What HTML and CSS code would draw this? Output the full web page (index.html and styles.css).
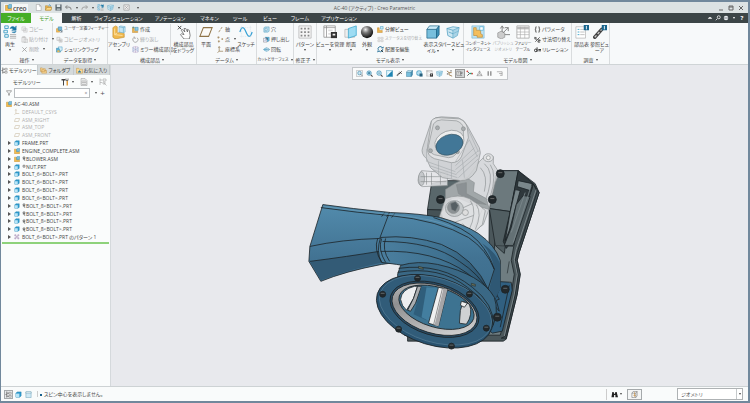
FILE: index.html
```html
<!DOCTYPE html>
<html lang="ja">
<head>
<meta charset="utf-8">
<title>AC-40 (アクティブ) - Creo Parametric</title>
<link rel="stylesheet" href="styles.css">
</head>
<body>
<svg class="defs" aria-hidden="true">
  <defs>
    <linearGradient id="gDuct" x1="0" y1="0" x2="0" y2="1"><stop offset="0" stop-color="#528bac"/><stop offset=".5" stop-color="#427393"/><stop offset="1" stop-color="#3b6a89"/></linearGradient>
    <linearGradient id="gBand" x1="0" y1="0" x2="1" y2="0"><stop offset="0" stop-color="#4b7f9f"/><stop offset=".6" stop-color="#3f7190"/><stop offset="1" stop-color="#2b516b"/></linearGradient>
    <linearGradient id="gRing" x1="0" y1="0" x2="1" y2="1"><stop offset="0" stop-color="#c9c9c9"/><stop offset=".35" stop-color="#8f8f90"/><stop offset=".7" stop-color="#b9b9ba"/><stop offset="1" stop-color="#e6e6e6"/></linearGradient>
    <radialGradient id="gBall" cx=".38" cy=".3" r=".7"><stop offset="0" stop-color="#eee"/><stop offset=".4" stop-color="#777"/><stop offset="1" stop-color="#111"/></radialGradient>
  </defs>
  <symbol id="doc" viewBox="0 0 16 16"><path d="M3 1h7l4 4v10H3z" fill="#fff" stroke="#888"/><path d="M10 1v4h4" fill="none" stroke="#888"/></symbol>
  <symbol id="screen" viewBox="0 0 16 16"><path d="M2 2h12v13H2z" fill="#cfe9f5" stroke="#5b93ae"/><path d="M2 2h12v3H2z" fill="#fff" stroke="#5b93ae"/></symbol>
  <symbol id="folder" viewBox="0 0 16 16"><path d="M1 14V4h5l2 2h6v8z" fill="#e9b650" stroke="#a87a24"/><path d="M1 14l3-6h12l-3 6z" fill="#fbd987" stroke="#a87a24"/><path d="M8 4q3-4 5 0" fill="none" stroke="#287fae" stroke-width="2"/></symbol>
  <symbol id="save" viewBox="0 0 16 16"><path d="M1 1h14v14H1z" fill="#59656b"/><path d="M4 1h8v6H4z" fill="#dfe7ea"/><path d="M4 10h8v5H4z" fill="#aeb8bc"/></symbol>
  <symbol id="undo" viewBox="0 0 16 16"><path d="M5 3L1 7l4 4M2 7h7q5 0 5 6" fill="none" stroke="#777" stroke-width="2"/></symbol>
  <symbol id="redo" viewBox="0 0 16 16"><path d="M11 3l4 4-4 4M14 7H7q-5 0-5 6" fill="none" stroke="#999" stroke-width="2"/></symbol>
  <symbol id="closewin" viewBox="0 0 16 16"><path d="M2 2h12v12H2z" fill="#eee" stroke="#999" stroke-width="1.5"/><path d="M5 5l6 6M11 5l-6 6" stroke="#999" stroke-width="1.5"/></symbol>
  <symbol id="regen" viewBox="0 0 16 16"><path d="M2 1h4v3H2zM1 6h4v3H1zM2 11h4v3H2z" fill="#eaf5fa" stroke="#3e9dc5"/><path d="M8 11h7M8 13h7M8 15h7" stroke="#aaa"/><path d="M8 4q2-4 6-1l1-2v5h-5l2-1q-2-2-4-1zM15 7q-1 3-5 1" fill="#1876a6" stroke="#1876a6" stroke-width=".6"/></symbol>
  <symbol id="copy" viewBox="0 0 16 16"><path d="M2 2h8v8H2zM6 6h8v8H6z" fill="#f3f3f3" stroke="#b5b5b5"/><path d="M8 9h4M8 11h4" stroke="#bbb"/></symbol>
  <symbol id="paste" viewBox="0 0 16 16"><path d="M2 3h9v11H2zM4 1h5v3H4zM7 7h8v8H7z" fill="#eee" stroke="#b0b0b0"/></symbol>
  <symbol id="cross" viewBox="0 0 16 16"><path d="M3 3l10 10M13 3L3 13" stroke="#999" stroke-width="1.8"/></symbol>
  <symbol id="udf" viewBox="0 0 16 16"><path d="M1 6h7v8H1z" fill="#f5bf55" stroke="#c38424"/><path d="M5 2h8v8H5z" fill="#78b9d9" stroke="#26789f"/><path d="M9 9l5 5M14 9v5H9" stroke="#345" fill="none"/></symbol>
  <symbol id="copygeo" viewBox="0 0 16 16"><path d="M2 3h7v7H2zM7 7h7v7H7z" fill="#eee" stroke="#aaa"/><circle cx="11" cy="11" r="2" fill="#bbb"/></symbol>
  <symbol id="shrink" viewBox="0 0 16 16"><path d="M1 5h9v9H1z" fill="#5db2d8" stroke="#25799f"/><path d="M5 2h9v8l-4 2z" fill="#d6eef8" stroke="#3390b8"/><path d="M3 10h5v4H3z" fill="#f2b94d"/></symbol>
  <symbol id="assemble" viewBox="0 0 16 16"><path d="M1 3l3-2 2 1v7l6-1 2 2v4L4 16l-3-2z" fill="#efb84e" stroke="#b98325" stroke-width=".6"/><path d="M3 4v7l9 1M6 9l-3 2" fill="none" stroke="#ffe1a0"/><path d="M8 2l2-1 5 1v6l-2 1-5-1z" fill="#c5e5f4" stroke="#65abc9" stroke-width=".6"/><path d="M8 2l5 1v6M13 3l2-1" stroke="#509cbd" fill="none" stroke-width=".6"/></symbol>
  <symbol id="create" viewBox="0 0 16 16"><path d="M1 3h4v9h8v3H1z" fill="#efba51" stroke="#b17d26"/><path d="M7 3h7v7H7z" fill="#8bcbe8" stroke="#27789e"/><path d="M3 1v5M1 3h5" stroke="#1689b5"/></symbol>
  <symbol id="repeat" viewBox="0 0 16 16"><path d="M12 4a6 6 0 1 1-7-1M5 1v4h4" fill="none" stroke="#999" stroke-width="1.7"/></symbol>
  <symbol id="mirror" viewBox="0 0 16 16"><path d="M2 3l5 5-5 5zM14 3L9 8l5 5z" fill="#dce6f5" stroke="#7986b8"/><path d="M8 1v14M2 2h12M2 14h12" stroke="#a388ba"/></symbol>
  <symbol id="drag" viewBox="0 0 16 16"><path d="M8 16L4 11l1-1 3 1-3-5 1-1 3 3-1-4 2 0 2 4 0-3 2 1 1 6-1 4z" fill="#fff" stroke="#555" stroke-width=".8"/><path d="M1 1l4 4M5 1L1 5" stroke="#333"/></symbol>
  <symbol id="plane" viewBox="0 0 16 16"><path d="M5 3h10l-4 10H1z" fill="#fcfbf7" stroke="#8f7448" stroke-width="1.2"/></symbol>
  <symbol id="axis" viewBox="0 0 16 16"><path d="M4 14l8-12" stroke="#8f7448" stroke-width="1.6" stroke-dasharray="6 2"/></symbol>
  <symbol id="point" viewBox="0 0 16 16"><path d="M3 1v5M1 3h5M12 5v4M10 7h4M4 10v5M2 12h5" stroke="#977746" stroke-width="1.5"/></symbol>
  <symbol id="csys" viewBox="0 0 16 16"><path d="M5 2v10h9M5 12l-4 3M3 4l2-3 2 3" fill="none" stroke="#8f7448" stroke-width="1.5"/></symbol>
  <symbol id="sketch" viewBox="0 0 16 16"><path d="M1 8q3-10 7 0t7 0" fill="none" stroke="#36a1d5" stroke-width="1.4"/><path d="M1 3h14M1 13h14M3 1v14M13 1v14" stroke="#c9d9e2" stroke-dasharray="1 1" stroke-width=".6"/></symbol>
  <symbol id="hole" viewBox="0 0 16 16"><path d="M2 4l3-2h9v10l-3 2H2z" fill="#b9dfef" stroke="#3f91b5"/><ellipse cx="7" cy="8" rx="2" ry="4" fill="#fff" stroke="#287da6"/></symbol>
  <symbol id="extrude" viewBox="0 0 16 16"><path d="M1 5h8v9H1z" fill="#eef" stroke="#777"/><path d="M5 3h9v8l-4 2V5z" fill="#6cbde0" stroke="#247da7"/><path d="M4 11l5-5M6 5h4v4" stroke="#173f55" fill="none"/></symbol>
  <symbol id="revolve" viewBox="0 0 16 16"><path d="M1 8q3-3 7-4v8q-5-1-7-4z" fill="#a9d8eb" stroke="#2d8ab3"/><path d="M8 4q6 1 7 4-1 3-7 4M2 8h13" fill="#d5ecf5" stroke="#2b7fa6"/></symbol>
  <symbol id="pattern" viewBox="0 0 16 16"><path d="M1 1h14v14H1z" fill="#f4f4f4" stroke="#999" stroke-width=".6"/><path d="M3 3h2v2H3zM7 3h2v2H7zM11 3h2v2h-2zM3 7h2v2H3zM7 7h2v2H7zM11 7h2v2h-2zM3 11h2v2H3zM7 11h2v2H7zM11 11h2v2h-2z" fill="#888"/></symbol>
  <symbol id="viewmgr" viewBox="0 0 16 16"><path d="M1 1h13v13H1z" fill="#fff" stroke="#888" stroke-width=".8"/><path d="M1 3h13M4 1v13" stroke="#888" stroke-width=".8"/><path d="M6 5h5v2H6zM6 9h3v2H6z" fill="#ddd"/><path d="M9 8h7v7H9z" fill="#333"/><path d="M11 10h3v2h-3z" fill="#eee"/></symbol>
  <symbol id="section" viewBox="0 0 16 16"><path d="M1 5h8l3 1v8H1z" fill="#eee" stroke="#aaa" stroke-width=".7"/><path d="M5 4l9-3v11l-9 3z" fill="#9ddcf3" stroke="#2ca0ca" stroke-width=".8"/></symbol>
  <symbol id="ball" viewBox="0 0 16 16"><circle cx="8" cy="8" r="7" fill="url(#gBall)"/></symbol>
  <symbol id="explode" viewBox="0 0 16 16"><path d="M1 4h4v6h7v5H1z" fill="#edb54c" stroke="#b98124"/><path d="M8 1h6v6H8z" fill="#c7e9f6" stroke="#2f91b9"/></symbol>
  <symbol id="status" viewBox="0 0 16 16"><path d="M2 3h5v4H2zM9 3h5v4H9zM2 9h5v4H2zM9 9h5v4H9z" fill="#eee" stroke="#bbb"/></symbol>
  <symbol id="editpos" viewBox="0 0 16 16"><path d="M3 9a5 5 0 0 1 9-5M13 7a5 5 0 0 1-8 5" fill="none" stroke="#1e6c94" stroke-width="2"/><path d="M9 5h6V1zM7 11l-6 4v-5z" fill="#1e6c94"/><path d="M9 9l5 5" stroke="#222" stroke-width="2"/></symbol>
  <symbol id="cube" viewBox="0 0 16 16"><path d="M1 5h11v10H1z" fill="#78bfdd" stroke="#1b6386" stroke-width=".8"/><path d="M1 5l3-4h11l-3 4z" fill="#c9eaf7" stroke="#1b6386" stroke-width=".8"/><path d="M12 5l3-4v10l-3 4z" fill="#3c8eb4" stroke="#1b6386" stroke-width=".8"/></symbol>
  <symbol id="selbox" viewBox="0 0 16 16"><path d="M2 5h9v10H2zM2 5l3-4h9l-3 4M14 1v10l-3 4" fill="#f5f7f7" stroke="#555"/><path d="M8 3v9M6 9l2 3 3-2" fill="none" stroke="#c58b3b" stroke-width="1.5"/></symbol>
  <symbol id="persp" viewBox="0 0 16 16"><path d="M1 4l7-2 7 1-2 9-5 3-6-3z" fill="#cce7f2" stroke="#4a9bbd" stroke-width=".8"/><path d="M1 4l7 2 7-3M8 6v9M3 8l5 2 6-3" fill="none" stroke="#4a9bbd" stroke-width=".8"/><path d="M8 6l7-3-2 9-5 3z" fill="#91c6dd" opacity=".6"/></symbol>
  <symbol id="iface" viewBox="0 0 16 16"><path d="M1 1h14v14H1z" fill="#bee3f2" stroke="#73b4d1" stroke-width=".7"/><path d="M3 10V3h3v3h5v4l2 1v3H7v-2H3z" fill="#f3be5d" stroke="#bb862f" stroke-width=".7"/><path d="M10 2h4v4h-4z" fill="#fff" stroke="#2b9bcb" stroke-width=".6"/></symbol>
  <symbol id="publish" viewBox="0 0 16 16"><path d="M2 9l4-2 4 2v5l-4 2-4-2z" fill="#ccc" stroke="#888" stroke-width=".7"/><path d="M7 8V2M5 4l2-3 2 3M8 9l6-6M10 3h4v4M10 11h6" fill="none" stroke="#777"/></symbol>
  <symbol id="table" viewBox="0 0 16 16"><path d="M1 1h14v14H1z" fill="#fff" stroke="#999" stroke-width=".8"/><path d="M1 2h14v3H1z" fill="#bbb"/><path d="M1 8h14M1 11h14M5 2v13M10 2v13" stroke="#aaa" stroke-width=".7"/></symbol>
  <symbol id="param" viewBox="0 0 16 16"><path d="M6 2H4v5L2 8l2 1v5h2M10 2h2v5l2 1-2 1v5h-2" fill="none" stroke="#222" stroke-width="1.5"/></symbol>
  <symbol id="dims" viewBox="0 0 16 16"><path d="M2 2v5h5M2 4h4M3 13L13 3M9 9h5v2H9v3h5" fill="none" stroke="#222" stroke-width="1.6"/></symbol>
  <symbol id="rel" viewBox="0 0 16 16"><circle cx="4" cy="10" r="3" fill="none" stroke="#222" stroke-width="2"/><path d="M7 3v10M10 8h6M10 11h6" stroke="#222" stroke-width="2"/></symbol>
  <symbol id="bom" viewBox="0 0 16 16"><path d="M1 2h11v13H1z" fill="#fff" stroke="#aaa" stroke-width=".7"/><path d="M3 5h2M3 8h2M3 11h2" stroke="#35a0c9"/><path d="M6 5h4M6 8h5M6 11h5" stroke="#bbb"/><path d="M10 0h6v6h-6z" fill="#17648d"/><path d="M13 1v4" stroke="#fff"/></symbol>
  <symbol id="chain" viewBox="0 0 16 16"><path d="M2 14l8-9" stroke="#444" stroke-width="4" stroke-linecap="round"/><path d="M2 14l8-9" stroke="#ccc" stroke-width="1.4" stroke-dasharray="3 2"/><path d="M10 0h6v6h-6z" fill="#17648d"/><path d="M13 1v4" stroke="#fff"/></symbol>
  <symbol id="asm" viewBox="0 0 16 16"><path d="M1 3h6v6h8v6H1z" fill="#f4bc4f" stroke="#b98325"/><path d="M7 3l2-2h6v7l-2 2H7z" fill="#78bddd" stroke="#24799f"/></symbol>
  <symbol id="part" viewBox="0 0 16 16"><path d="M2 5l3-3h9v9l-3 3H2z" fill="#2f9bce" stroke="#1b7daa"/><path d="M2 6h8v8H2z" fill="#b8e5f7"/></symbol>
  <symbol id="tplane" viewBox="0 0 16 16"><path d="M4 4h11l-3 8H1z" fill="none" stroke="#c8baa0" stroke-width="1.5"/></symbol>
  <symbol id="tcsys" viewBox="0 0 16 16"><path d="M5 2v10h9M5 12l-4 3M3 4l2-3 2 3" fill="none" stroke="#c8baa0" stroke-width="1.5"/></symbol>
  <symbol id="tpattern" viewBox="0 0 16 16"><path d="M2 2h3v3H2zM10 2h3v3h-3zM2 10h3v3H2zM10 10h3v3h-3zM6 6h3v3H6z" fill="#fff" stroke="#75508f"/></symbol>
  <symbol id="flex" viewBox="0 0 12 16"><path d="M3 3h6v4H3zM2 9h8M6 7v6l4 1" fill="none" stroke="#333" stroke-width="1.6"/></symbol>
  <symbol id="fixed" viewBox="0 0 12 16"><path d="M3 4h6v6H3z" fill="none" stroke="#444" stroke-width="1.8"/></symbol>
  <symbol id="mag" viewBox="0 0 16 16"><circle cx="7" cy="7" r="5" fill="#d4edf7" stroke="#2f88b1" stroke-width="1.6"/><path d="M11 11l4 4" stroke="#444" stroke-width="2.4"/><path d="M5 7h4" stroke="#17688f" stroke-width="1.5"/></symbol>
  <symbol id="magplus" viewBox="0 0 16 16"><circle cx="7" cy="7" r="5" fill="#d4edf7" stroke="#2f88b1" stroke-width="1.6"/><path d="M11 11l4 4" stroke="#444" stroke-width="2.4"/><path d="M4 7h6M7 4v6" stroke="#17688f" stroke-width="2"/></symbol>
  <symbol id="refit" viewBox="0 0 16 16"><path d="M1 1h14v14H1z" fill="#edf5f8" stroke="#999"/><circle cx="8" cy="7" r="4" fill="#cde7f2" stroke="#4990b0" stroke-width="1.5"/><path d="M11 10l3 3" stroke="#555" stroke-width="2"/></symbol>
  <symbol id="repaint" viewBox="0 0 16 16"><path d="M1 1h14v14H1z" fill="#d8f1fa" stroke="#368baf"/><path d="M1 15L15 1v14z" fill="#1f84b2"/><path d="M4 10l5-6" stroke="#fff" stroke-width="2"/></symbol>
  <symbol id="render" viewBox="0 0 16 16"><path d="M2 13l6-6" fill="none" stroke="#777" stroke-width="3"/><path d="M7 9l6-6M8 4l5 5" stroke="#333" fill="none" stroke-width="2"/></symbol>
  <symbol id="orient" viewBox="0 0 16 16"><circle cx="7" cy="7" r="6" fill="#8bcbe5" stroke="#2581ac"/><path d="M7 1v12M1 7h12" stroke="#fff"/><path d="M8 8h7v7H8z" fill="#275f7b"/></symbol>
  <symbol id="csysdot" viewBox="0 0 16 16"><path d="M2 2l5 4v5M7 6h6M7 11l7 3" fill="none" stroke="#99784b" stroke-width="2"/><path d="M2 9h3M10 2h3" stroke="#333" stroke-width="2"/></symbol>
  <symbol id="annot" viewBox="0 0 16 16"><path d="M2 3h8v9H2z" fill="#fff" stroke="#444"/><path d="M4 6h4M4 9h4M10 5h4v3h-4M10 12h4" stroke="#333" fill="none"/></symbol>
  <symbol id="spin" viewBox="0 0 16 16"><path d="M3 3l5 5-5 5" fill="none" stroke="#555" stroke-width="2"/><path d="M8 8h6" stroke="#25a178" stroke-width="3"/><circle cx="3" cy="3" r="2" fill="#d54c48"/><circle cx="14" cy="8" r="2" fill="#d54c48"/></symbol>
  <symbol id="tri" viewBox="0 0 16 16"><path d="M8 2l6 11H2zM8 2v7l6 4M8 9l-6 4" fill="none" stroke="#888" stroke-width="1.2"/></symbol>
  <symbol id="pause" viewBox="0 0 16 16"><path d="M5 3v10M11 3v10" stroke="#888" stroke-width="3"/></symbol>
  <symbol id="play" viewBox="0 0 16 16"><path d="M2 4h12M7 8h7M9 12h5M14 4v9" stroke="#999" stroke-width="1.6"/></symbol>
  <symbol id="treeicon" viewBox="0 0 16 16"><path d="M4 1v14M4 5h5M4 12h5M1 8h3" stroke="#555" stroke-width="1.5"/><path d="M9 3h5v4H9zM9 10h5v4H9z" fill="#fff" stroke="#555"/></symbol>
  <symbol id="folders" viewBox="0 0 16 16"><path d="M1 10V2h4l2 2h5v6zM4 14V6h4l2 2h5v6z" fill="#f5d391" stroke="#bd8838"/></symbol>
  <symbol id="star" viewBox="0 0 16 16"><path d="M1 14V3h5l2 2h7v9z" fill="#f8d994" stroke="#bd8838"/><path d="M8 6l1 3h3l-2 2 1 3-3-2-3 2 1-3-2-2h3z" fill="#287aac"/></symbol>
  <symbol id="hammer" viewBox="0 0 16 16"><path d="M1 2h8v3H1zM4 5h2v10H4z" fill="#444"/><path d="M11 5h3v10h-3z" fill="#df9b3c"/><path d="M10 1v4h4V1" fill="none" stroke="#555" stroke-width="1.5"/></symbol>
  <symbol id="sheet" viewBox="0 0 16 16"><path d="M2 1h8l4 4v10H2z" fill="#e9eaea" stroke="#999"/><path d="M4 6h8v7H4zM4 9h8M8 6v7" fill="#fff" stroke="#999"/></symbol>
  <symbol id="cols" viewBox="0 0 16 16"><path d="M2 1v13M2 4h4M2 9h4M8 2h6v4H8zM8 8h4v4H8zM10 10l5 5" fill="none" stroke="#aaa" stroke-width="1.3"/></symbol>
  <symbol id="funnel" viewBox="0 0 16 16"><path d="M1 2h14L9 9v5H7V9z" fill="none" stroke="#555" stroke-width="1.3"/></symbol>
  <symbol id="bino" viewBox="0 0 16 16"><path d="M3 2h3l1 4h2l1-4h3l3 12h-6V9H7v5H1z" fill="#222"/></symbol>
</svg>

<div class="window">
  <header class="titlebar">
    <div class="quick">
      <span class="brand"><svg class="ic"><use href="#asm"/></svg><b>creo</b></span>
      <button aria-label="新規"><svg class="ic"><use href="#doc"/></svg></button>
      <button aria-label="開く"><svg class="ic"><use href="#folder"/></svg></button>
      <button aria-label="保存"><svg class="ic"><use href="#save"/></svg></button>
      <button class="drop" aria-label="元に戻す"><svg class="ic sm"><use href="#undo"/></svg></button>
      <button class="drop" aria-label="やり直し"><svg class="ic sm"><use href="#redo"/></svg></button>
      <button aria-label="再生"><svg class="ic sm"><use href="#regen"/></svg></button>
      <button class="drop" aria-label="ウィンドウ"><svg class="ic sm"><use href="#persp"/></svg></button>
      <button aria-label="閉じる"><svg class="ic sm"><use href="#closewin"/></svg></button>
      <button class="drop" aria-label="カスタマイズ"></button>
    </div>
    <h1>AC-40 (アクティブ) - Creo Parametric</h1>
    <div class="wincontrols">
      <button aria-label="最小化"><svg viewBox="0 0 6 6"><path d="M1 5h4"/></svg></button>
      <button aria-label="最大化"><svg viewBox="0 0 6 6"><path d="M1 1h4v4H1zM1 2h4"/></svg></button>
      <button aria-label="終了"><svg viewBox="0 0 6 6"><path d="M1 1l4 4M5 1L1 5"/></svg></button>
    </div>
  </header>

  <nav class="tabs">
    <button class="file">ファイル</button>
    <button class="on">モデル</button>
    <button class="t3">解析</button>
    <button class="t4">ライブシミュレーション</button>
    <button class="t5">アノテーション</button>
    <button class="t6">マネキン</button>
    <button class="t7">ツール</button>
    <button class="t7">ビュー</button>
    <button class="t7">フレーム</button>
    <button class="t5">アプリケーション</button>
    <div class="help">
      <button aria-label="リボンを最小化"><svg viewBox="0 0 8 8"><path d="M1 5q3-5 6 0z" fill="#fff"/></svg></button>
      <button aria-label="検索"><svg viewBox="0 0 8 8"><circle cx="5" cy="3" r="2" fill="none" stroke="#fff"/><path d="M3 5L1 7" stroke="#fff"/></svg></button>
      <button aria-label="学習"><svg viewBox="0 0 8 8"><circle cx="4" cy="4" r="3" fill="#e9eeee"/><path d="M1 4h6" stroke="#667"/></svg></button>
      <button class="drop" aria-label="その他"></button>
      <button>?</button>
    </div>
  </nav>

  <div class="ribbon">
    <section class="group g1"><div class="tools">
      <button class="big w18 drop"><svg><use href="#regen"/></svg><span>再生</span></button>
      <div class="list">
        <button class="off"><svg><use href="#copy"/></svg>コピー</button>
        <button class="off drop"><svg><use href="#paste"/></svg>貼り付け</button>
        <button class="off drop"><svg><use href="#cross"/></svg>削除</button>
      </div></div><h2>操作</h2></section>
    <section class="group g2"><div class="tools">
      <div class="list pad">
        <button class="tight"><svg><use href="#udf"/></svg>ユーザー定義フィーチャー</button>
        <button class="off"><svg><use href="#copygeo"/></svg>コピージオメトリ</button>
        <button><svg><use href="#shrink"/></svg>シュリンクラップ</button>
      </div></div><h2>データを取得</h2></section>
    <section class="group g3"><div class="tools">
      <button class="big w22 drop"><svg><use href="#assemble"/></svg><span>アセンブリ</span></button>
      <div class="list">
        <button><svg><use href="#create"/></svg>作成</button>
        <button class="off"><svg><use href="#repeat"/></svg>繰り返し</button>
        <button><svg><use href="#mirror"/></svg>ミラー構成部品</button>
      </div>
      <button class="big w26 split"><svg><use href="#drag"/></svg><span>構成部品<br>をドラッグ</span></button>
      </div><h2>構成部品</h2></section>
    <section class="group g4"><div class="tools">
      <button class="big w18"><svg><use href="#plane"/></svg><span>平面</span></button>
      <div class="list">
        <button><svg><use href="#axis"/></svg>軸</button>
        <button class="drop"><svg><use href="#point"/></svg>点</button>
        <button><svg><use href="#csys"/></svg>座標系</button>
      </div>
      <button class="big w20"><svg><use href="#sketch"/></svg><span>スケッチ</span></button>
      </div><h2>データム</h2></section>
    <section class="group g5"><div class="tools">
      <div class="list pad">
        <button><svg><use href="#hole"/></svg>穴</button>
        <button><svg><use href="#extrude"/></svg>押し出し</button>
        <button><svg><use href="#revolve"/></svg>回転</button>
      </div></div><h2 class="tight">カットとサーフェス</h2></section>
    <section class="group g6"><div class="tools">
      <button class="big w22 drop"><svg><use href="#pattern"/></svg><span>パターン</span></button>
      </div><h2>修正子</h2></section>
    <section class="group g7"><div class="tools">
      <button class="big w26 drop"><svg><use href="#viewmgr"/></svg><span>ビューを管理</span></button>
      <button class="big w16 drop"><svg><use href="#section"/></svg><span>断面</span></button>
      <button class="big w16 drop"><svg><use href="#ball"/></svg><span>外観</span></button>
      <div class="list">
        <button><svg><use href="#explode"/></svg>分解ビュー</button>
        <button class="off tight"><svg><use href="#status"/></svg>ステータスを切り替え</button>
        <button><svg><use href="#editpos"/></svg>配置を編集</button>
      </div>
      <button class="big w20 inlinedrop"><svg><use href="#cube"/></svg><span>表示スタ<br>イル</span></button>
      <button class="big w20 drop"><svg><use href="#persp"/></svg><span>パースビュ</span></button>
      </div><h2>モデル表示</h2></section>
    <section class="group g8"><div class="tools">
      <button class="big w28"><svg><use href="#iface"/></svg><span class="tight">コンポーネント<br>インタフェース</span></button>
      <button class="big w22 off"><svg><use href="#publish"/></svg><span class="tight">パブリッシュ<br>ジオメトリ</span></button>
      <button class="big w18"><svg><use href="#table"/></svg><span class="tight">ファミリー<br>テーブル</span></button>
      <div class="list">
        <button><svg><use href="#param"/></svg>パラメータ</button>
        <button><svg><use href="#dims"/></svg>寸法切り替え</button>
        <button><svg><use href="#rel"/></svg>リレーション</button>
      </div></div><h2>モデル意図</h2></section>
    <section class="group g9"><div class="tools">
      <button class="big w18"><svg><use href="#bom"/></svg><span>部品表</span></button>
      <button class="big w18"><svg><use href="#chain"/></svg><span>参照ビュ<br>ーア</span></button>
      </div><h2>調査</h2></section>
  </div>

  <main>
    <aside>
      <div class="sidetabs">
        <button class="on"><svg class="ic sm"><use href="#treeicon"/></svg>モデルツリー</button>
        <button><svg class="ic"><use href="#folders"/></svg>フォルダブ</button>
        <button><svg class="ic"><use href="#star"/></svg>お気に入り</button>
      </div>
      <div class="treehead">
        <h2>モデルツリー</h2>
        <button class="drop" aria-label="設定"><svg class="ic"><use href="#hammer"/></svg></button>
        <button class="drop" aria-label="表示"><svg class="ic"><use href="#sheet"/></svg></button>
        <button aria-label="列"><svg class="ic"><use href="#cols"/></svg></button>
      </div>
      <div class="filter">
        <label for="q" aria-label="フィルタ"><svg class="ic sm"><use href="#funnel"/></svg></label>
        <div class="field"><input id="q" type="text"><button aria-label="消去">×</button></div>
        <button class="drop" aria-label="オプション"></button>
        <button class="plus" aria-label="追加">+</button>
      </div>
      <ul class="tree">
        <li class="root"><svg class="ic sm"><use href="#asm"/></svg>AC-40.ASM</li>
        <li class="datum"><svg class="ic sm"><use href="#tcsys"/></svg>DEFAULT_CSYS</li>
        <li class="datum"><svg class="ic sm"><use href="#tplane"/></svg>ASM_RIGHT</li>
        <li class="datum"><svg class="ic sm"><use href="#tplane"/></svg>ASM_TOP</li>
        <li class="datum"><svg class="ic sm"><use href="#tplane"/></svg>ASM_FRONT</li>
        <li class="node"><svg class="ic sm"><use href="#part"/></svg>FRAME.PRT</li>
        <li class="node"><svg class="ic sm"><use href="#asm"/></svg>ENGINE_COMPLETE.ASM</li>
        <li class="node"><svg class="ic sm"><use href="#asm"/></svg><svg class="mark"><use href="#flex"/></svg>BLOWER.ASM</li>
        <li class="node"><svg class="ic sm"><use href="#part"/></svg><svg class="mark"><use href="#fixed"/></svg>NUT.PRT</li>
        <li class="node"><svg class="ic sm"><use href="#part"/></svg>BOLT_6&lt;BOLT&gt;.PRT</li>
        <li class="node"><svg class="ic sm"><use href="#part"/></svg>BOLT_6&lt;BOLT&gt;.PRT</li>
        <li class="node"><svg class="ic sm"><use href="#part"/></svg>BOLT_6&lt;BOLT&gt;.PRT</li>
        <li class="node"><svg class="ic sm"><use href="#part"/></svg>BOLT_6&lt;BOLT&gt;.PRT</li>
        <li class="node"><svg class="ic sm"><use href="#part"/></svg><svg class="mark"><use href="#flex"/></svg>BOLT_8&lt;BOLT&gt;.PRT</li>
        <li class="node"><svg class="ic sm"><use href="#part"/></svg><svg class="mark"><use href="#flex"/></svg>BOLT_8&lt;BOLT&gt;.PRT</li>
        <li class="node"><svg class="ic sm"><use href="#part"/></svg><svg class="mark"><use href="#flex"/></svg>BOLT_8&lt;BOLT&gt;.PRT</li>
        <li class="node"><svg class="ic sm"><use href="#part"/></svg><svg class="mark"><use href="#flex"/></svg>BOLT_8&lt;BOLT&gt;.PRT</li>
        <li class="node"><svg class="ic sm"><use href="#tpattern"/></svg>BOLT_6&lt;BOLT&gt;.PRT のパターン 1</li>
      </ul>
    </aside>

    <div class="viewport">
      <svg class="model" viewBox="110 65 638 322" role="img" aria-label="ブロワーアセンブリ">
        <g stroke="#1c2327" stroke-width=".8" stroke-linejoin="round" fill="none">
          <!-- frame -->
          <path fill="#4b575b" d="M489 209l8-38h21l17 13 4 9-20 60-2 8 3 14-3 20-11 45-3 2H407v-5l-3-1v-6l84-10z"/>
          <path fill="#6f7d81" d="M495 240l10 3 11-10-5 28 3 14-3 19-11 42h-88v-7l75-15z"/>
          <path fill="#6c797d" d="M497 171h21l-8 41-21-3z"/>
          <path fill="#515e62" d="M489 209l21 3-6 42-9-8z"/>
          <path fill="#2f383c" d="M518 171l15 13-1 5-18 50-8 10-3-7 7-30z"/>
          <path fill="#7a878b" d="M515 190l5 1-11 40-4 10 5-29zM518 181l14 3-2 7-13-4z"/>
          <path fill="#647175" d="M516 205l7-9 7 1-17 49h-9l7-18z"/>
          <path stroke="#7c898d" d="M531 186l-18 57M525 193l-14 40"/>
          <path fill="#3f4b50" d="M533 184l6 9-20 60-2 8 3 14-3 20-11 44h-5l4-2 10-42 3-19-3-14 2-9 20-61z"/>
          <path stroke="#869296" d="M536 190l-20 60-2 10 3 15-3 20-10 42"/>
          <path stroke="#313a3e" d="M494 246l19 1M509 262l-2 12"/>
          <path fill="#59676b" d="M427 210l4-26 14-3h14l-3 30z"/>
          <path fill="#455256" d="M427 210l32 1-1 14-31-7z"/>
          <!-- engine mount arms -->
          <g stroke="#85898c" stroke-width=".6">
            <path fill="#d4d6d8" fill-opacity=".85" d="M479 162l6-6 8 1v7l6 9-4 10-6 26-6 16-14 10-22-2-6-20z"/>
            <ellipse cx="488" cy="158" rx="5" ry="4" fill="#dfe0e2"/><circle cx="488" cy="158" r="2" fill="#eee"/>
            <path d="M484 164q10 8 4 28t-14 36M480 168q8 8 4 24M490 165q7 10 0 32"/>
            <path fill="#a1a7a9" d="M454 184l12-6 8 5-1 9 13 7 3 11-16-5-16-7-12 2v-10z"/>
            <path fill="#8b9194" d="M456 185l10-2v11l20 11-13-2-15-9z"/>
            <path fill="#dfe1e3" fill-opacity=".85" d="M445 199q13-5 24 0l9 6 7 6-3 14-8 8-9 1-22-3q-8-6-3-17z"/>
            <path d="M470 201q8 11-2 31M476 205q6 9-1 25M450 214l22-10M448 225l25-9M462 224l9 10"/>
            <ellipse cx="454" cy="209" rx="9" ry="8" fill="#c6cacc"/><ellipse cx="453" cy="208" rx="6" ry="6" fill="#8c9295"/><path fill="#565f63" d="M450 204l5-2 3 4-3 6-4-2z"/><circle cx="465" cy="213" r="3" fill="#ddd"/>
            <path fill="#e4e5e7" fill-opacity=".85" d="M421 171l26 2v13l-25 1q-6-2-4-10z"/>
            <ellipse cx="421" cy="179" rx="3" ry="7" fill="#c5c8cb"/><path d="M426 173v12M431 173v12M440 173v12M420 177h26M420 182h26"/>
            <path fill="#cdcfd1" fill-opacity=".9" d="M431 121q3-4 10-4l17 1q6 2 9 8l12 22q2 5 0 10l-3 13q-7 11-16 10l-18-3-12-10-4-9q-6-5-4-11z"/>
            <path fill="#e0e1e3" d="M431 121q3-4 10-3l18 1q6 2 8 9l1 10-7 19q-3 6-10 6l-17-4q-8-3-7-12z"/>
            <path d="M433 124q3-4 8-4l15 1q6 2 7 7l0 9-7 17q-3 4-8 4l-14-3q-6-2-6-9z" fill="#d4d6d8"/>
            <path stroke="#a5a9ac" d="M455 162l14-22 8 17M455 166l19-18M455 170l23-19M456 174l22-19M458 178l20-19M427 162l28 10M429 166l27 9M432 170l25 8M467 128l11 24M426 149v13M451 163v16M438 161v15M462 160l2 18"/>
            <g fill="#a9adaf"><circle cx="437" cy="128" r="2"/><circle cx="463" cy="129" r="2"/><circle cx="430" cy="151" r="2"/><circle cx="457" cy="152" r="2"/></g>
            <ellipse cx="449" cy="142" rx="15" ry="11" transform="rotate(-20 449 142)" fill="#eceded"/>
            <ellipse cx="449" cy="145" rx="14" ry="10" transform="rotate(-20 449 145)" fill="#427797" stroke="#35515f"/>
          </g>
          <!-- mount bolts -->
          <g fill="#22282b"><circle cx="500" cy="174" r="4"/><circle cx="492" cy="200" r="4"/><circle cx="440" cy="200" r="4"/></g>
          <g stroke="#777"><path d="M498 173h4M490 199h4M438 199h4"/></g>
          <!-- side bracket -->
          <path fill="#316081" d="M494 282l17 1 1 8-10 41-10 2-6-6z"/>
          <path d="M492 288l7 12-3 1 3 11-6-7M509 286l-9 42"/>
          <!-- volute -->
          <path fill="url(#gDuct)" d="M322 205l31 4 37 4q30 1 50 5 24 7 38 16 17 12 22 27v27l-10 23-35-30-59-18-15 2q-37 7-61 17l-12-20 1-15z"/>
          <path fill="#335b76" stroke="none" d="M309 262q39-5 69-10l4 11q-34 7-62 18z"/>
          <path fill="url(#gBand)" d="M380 238q31-3 61 7 33 13 48 47l-2 9q-33-28-67-32l-24-4q-8-1-15-2-6-11-1-25z"/>
          <path fill="#2f5874" stroke="none" d="M482 244q14 9 18 21v25l-8 15-4-12 6-22q-1-14-12-27z"/>
          <path d="M320 208q36 5 69 8 50 5 79 22 18 12 26 32M388 215l-9 24q-38 1-70 8M309 262q39-5 69-10M377 239q-4 11 4 24M381 239q-4 11 4 24M385 239q-4 11 4 23M384 213l-3 4M389 213l-3 4M394 214l-3 4M382 242q50 0 77 20 20 13 29 30M380 252q54-2 87 22 12 9 20 18l7-22q-4-14-16-28-13-14-45-24"/>
          <path stroke="#6498b5" d="M323 207l32 4 35 4q44 4 63 13"/>
          <!-- collar and flange -->
          <path fill="#3a6885" d="M397 275l3-9q17-5 37-1 44 10 57 33 5 15-2 30l-15 5-79-43z"/>
          <path d="M398 269q43-6 74 19 22 17 21 38M397 273q42-7 70 15 25 17 24 39"/>
          <ellipse cx="434" cy="312" rx="60" ry="34" transform="rotate(17 434 312)" fill="#28516e"/>
          <ellipse cx="435" cy="311" rx="58" ry="32" transform="rotate(17 435 311)" fill="#315c79" stroke="#6188a0" stroke-width=".5"/>
          <ellipse cx="434" cy="310" rx="46" ry="26" transform="rotate(17 434 310)" fill="#284c66"/>
          <ellipse cx="434" cy="310" rx="44" ry="24" transform="rotate(17 434 310)" fill="url(#gRing)"/>
          <ellipse cx="436" cy="308" rx="39" ry="20" transform="rotate(17 436 308)" fill="#3d7391"/>
          <!-- impeller seen through the opening -->
          <path fill="#eceef0" d="M400 300q1-10 14-13h3l-4 12-7 12q-5-4-6-11z"/>
          <path fill="#a9adb0" d="M417 287h4l-6 17-5 8-3-1 6-12z"/>
          <path fill="#2f5e7b" stroke="none" d="M421 287l14 2-9 32-13-6z"/>
          <path fill="#437e9f" stroke="none" d="M426 288l12 1-9 33-8-4z"/>
          <path fill="#f0f0f0" d="M438 288l9 2-9 37-10-3z"/><path stroke="#777" d="M442 289l-9 37M445 290l-9 37"/>
          <path fill="#a6a6a8" stroke="none" d="M443 289l4 1-9 37-4-1z"/>
          <path fill="#cfd1d3" d="M463 302l6 3q4 10-3 20l-7-1 1-13z"/><path fill="#eee" d="M461 302l6 2-3 4-4-2z"/>
          <g fill="#22282b"><circle cx="417" cy="279" r="3"/><circle cx="382" cy="295" r="3"/><circle cx="398" cy="330" r="3"/><circle cx="451" cy="347" r="3"/><circle cx="486" cy="329" r="3"/><circle cx="469" cy="295" r="3"/><circle cx="505" cy="290" r="4"/><circle cx="497" cy="318" r="4"/></g>
          <g stroke="#70777a"><path d="M415 278h4M380 294h4M396 329h4M449 346h4M484 328h4M467 294h4M503 289h4M495 317h4"/></g>
          <path fill="#656f58" stroke-width=".5" d="M418 267l4 1 1 2-5-1zM471 284l4 1 0 2-4-1z"/>
        </g>
      </svg>
      <div class="viewtools">
        <button aria-label="再フィット"><svg class="ic"><use href="#refit"/></svg></button>
        <button aria-label="拡大"><svg class="ic"><use href="#magplus"/></svg></button>
        <button aria-label="縮小"><svg class="ic"><use href="#mag"/></svg></button>
        <button aria-label="再描画"><svg class="ic"><use href="#repaint"/></svg></button>
        <button aria-label="レンダリング"><svg class="ic"><use href="#render"/></svg></button>
        <button aria-label="表示スタイル"><svg class="ic"><use href="#cube"/></svg></button>
        <button aria-label="方向"><svg class="ic"><use href="#orient"/></svg></button>
        <button aria-label="ビュー管理"><svg class="ic"><use href="#viewmgr"/></svg></button>
        <button aria-label="パース"><svg class="ic"><use href="#persp"/></svg></button>
        <button aria-label="データム表示"><svg class="ic"><use href="#csysdot"/></svg></button>
        <button class="on" aria-label="注記表示"><svg class="ic"><use href="#annot"/></svg></button>
        <button aria-label="スピン中心"><svg class="ic"><use href="#spin"/></svg></button>
        <button aria-label="シミュレーション"><svg class="ic"><use href="#tri"/></svg></button>
        <button aria-label="一時停止"><svg class="ic"><use href="#pause"/></svg></button>
        <button aria-label="再開"><svg class="ic"><use href="#play"/></svg></button>
      </div>
    </div>
  </main>

  <footer>
    <button class="pressed" aria-label="ツリー"><svg class="ic"><use href="#treeicon"/></svg></button>
    <button aria-label="ブラウザ"><svg class="ic"><use href="#part"/></svg></button>
    <button aria-label="全画面"><svg class="ic"><use href="#screen"/></svg></button>
    <p>スピン中心を表示しません。</p>
    <button class="find drop" aria-label="検索"><svg class="ic"><use href="#bino"/></svg></button>
    <button class="pressed box" aria-label="選択"><svg class="ic"><use href="#selbox"/></svg></button>
    <div class="pick"><select aria-label="選択フィルタ"><option>ジオメトリ</option></select></div>
  </footer>
</div>
</body>
</html>
```
FILE: styles.css
```css
* { box-sizing: border-box; }

body {
  margin: 0;
  font-family: "Open Sans", "Noto Sans CJK JP", sans-serif;
  font-size: 5px;
  line-height: 6px;
  font-feature-settings: "palt";
  color: #444;
}

h1, h2, p, ul { margin: 0; padding: 0; font-size: inherit; font-weight: normal; }

button {
  display: flex;
  align-items: center;
  justify-content: center;
  margin: 0;
  padding: 0;
  border: 0;
  background: none;
  color: inherit;
  font: inherit;
  font-feature-settings: inherit;
  white-space: nowrap;
}

.defs { position: absolute; width: 0; height: 0; }
.ic { width: 8px; height: 8px; flex: none; display: block; }
.ic.sm { width: 6px; height: 6px; }

.drop::after {
  content: "";
  border: 1px solid transparent;
  border-top: 2px solid #444;
  border-bottom: 0;
  margin-left: 3px;
}

.window {
  display: flex;
  flex-direction: column;
  height: 100vh;
  border: 2px solid #71889c;
  border-width: 2px 2px 2px 1px;
  background: #f7f9fa;
}

/* title bar */
.titlebar {
  display: grid;
  grid-template-columns: 1fr auto 1fr;
  align-items: center;
  height: 11px;
  flex: none;
  background: #dce2e3;
}
.quick { display: flex; align-items: center; gap: 3px; padding-left: 3px; }
.brand { display: flex; align-items: center; gap: 1px; margin-right: 4px; padding: 0 1px; background: #f4f6f6; line-height: 8px; }
.brand b { font-family: Lato, sans-serif; font-size: 7px; font-weight: 700; color: #555; }
.titlebar .ic { width: 7px; height: 7px; }
.titlebar .drop::after { margin-left: 4px; }
.titlebar h1 { color: #555; }
.wincontrols { display: flex; justify-content: flex-end; gap: 4px; padding-right: 4px; }
.wincontrols svg { width: 6px; height: 6px; fill: none; stroke: #666; }

/* ribbon tabs */
.tabs { display: flex; height: 10px; flex: none; background: #3c4547; color: #fff; }
.tabs > button { width: 31px; }
.tabs .file { width: 30px; background: #45ae27; }
.tabs .on { background: #f7f9fa; color: #3b9c25; }
.tabs .t3 { width: 29px; }
.tabs .t4 { width: 55px; }
.tabs .t5 { width: 48px; }
.tabs .t6 { width: 31px; }
.tabs .t7 { width: 30px; }
.help { display: flex; margin-left: auto; padding-right: 2px; }
.help button { width: 8px; font-size: 6px; font-weight: 700; }
.help svg { width: 6px; height: 6px; }
.help .drop::after { border-top-color: #fff; margin: 0; }

/* ribbon groups */
.ribbon { display: flex; height: 42px; flex: none; border-bottom: 1px solid #cfd4d6; }
.group {
  display: flex;
  flex-direction: column;
  flex: none;
  border-right: 1px solid #d9dcde;
}
.g1 { width: 52px; }
.g2 { width: 55px; }
.g3 { width: 89px; }
.g4 { width: 60px; }
.g5 { width: 37px; }
.g6 { width: 23px; }
.g7 { width: 147px; }
.g8 { width: 108px; }
.g9 { width: 38px; }
.tools { display: flex; justify-content: center; flex: 1; padding-top: 1px; }
.group h2 { display: flex; align-items: center; justify-content: center; height: 9px; white-space: nowrap; }
.group h2::after {
  content: "";
  border: 1px solid transparent;
  border-top: 2px solid #444;
  border-bottom: 0;
  margin-left: 2px;
}
.list { display: flex; flex-direction: column; flex: 1; min-width: 0; padding-left: 2px; }
.list.pad { padding-left: 3px; }
.g5 .list.pad { padding-left: 6px; }
.list button { justify-content: flex-start; gap: 1px; height: 10px; }
.list svg { width: 7px; height: 7px; flex: none; }
.big { flex-direction: column; justify-content: flex-start; padding-top: 1px; flex: none; }
.big svg { width: 14px; height: 14px; flex: none; margin-bottom: 2px; }
.big.drop::after { margin: 2px 0 0; }
.big.split { border-left: 1px solid #d9dcde; }
.inlinedrop span::after {
  content: "";
  display: inline-block;
  vertical-align: middle;
  border: 1px solid transparent;
  border-top: 2px solid #444;
  border-bottom: 0;
  margin-left: 1px;
}
.w16 { width: 16px; }
.w18 { width: 18px; }
.w20 { width: 20px; }
.w22 { width: 22px; }
.w26 { width: 26px; }
.w28 { width: 28px; }
.off { color: #a8aaac; }
.tight { font-size: 4px; }

/* work area */
main { display: flex; flex: 1; min-height: 0; }
aside { width: 110px; flex: none; background: #fafcfc; border-right: 1px solid #d5d9dc; }
.sidetabs { display: grid; grid-template-columns: repeat(3, 1fr); height: 10px; background: #d5dadb; }
.sidetabs button { gap: 1px; border-right: 1px solid #c5cacc; }
.sidetabs .on { background: #fafcfc; }
.sidetabs .ic { width: 7px; height: 7px; }
.treehead { display: flex; align-items: center; gap: 6px; height: 12px; padding: 1px 3px 0 12px; }
.treehead h2 { flex: 1; }
.filter { display: flex; align-items: center; gap: 2px; height: 11px; padding: 0 4px 0 5px; }
.field { display: flex; flex: 1; height: 10px; border: 1px solid #b9bdc0; background: #fff; }
.field input { flex: 1; min-width: 0; border: 0; padding: 0 1px; background: none; font-size: 5px; outline: 0; }
.field button { width: 6px; color: #777; }
.plus { width: 8px; font-size: 8px; color: #555; }
.tree {
  display: grid;
  grid-template-rows: repeat(18, 1fr);
  height: 146px;
  margin: 0 1px;
  padding: 2px 0 1px;
  list-style: none;
  border-bottom: 2px solid #8ed27b;
}
.tree li { display: flex; align-items: center; gap: 2px; padding-left: 12px; white-space: nowrap; min-height: 0; }
.tree .root { padding-left: 4px; }
.tree .datum { color: #b0b0b0; }
.tree .node { padding-left: 6px; }
.tree .node::before {
  content: "";
  border: 2px solid transparent;
  border-left: 3px solid #555;
  border-right: 0;
  margin-right: 1px;
}
.mark { width: 4px; height: 5px; flex: none; margin-right: -2px; }

.viewport { position: relative; flex: 1; min-width: 0; background: #e8e9ed; }
.model { display: block; width: 100%; height: 100%; }
.viewtools {
  position: absolute;
  top: 2px;
  left: 50%;
  transform: translateX(-50%);
  display: flex;
  height: 13px;
  padding: 1px 2px;
  border: 1px solid #c3c6c9;
  background: #fafbfb;
}
.viewtools button { width: 10px; }
.viewtools .ic { width: 7px; height: 7px; }
.viewtools .on { background: #d2d5d7; box-shadow: inset 0 0 0 1px #999; }

/* status bar */
footer {
  display: flex;
  align-items: center;
  gap: 1px;
  height: 15px;
  flex: none;
  padding: 1px 5px 1px 3px;
  border-top: 1px solid #cdd2d4;
  background: #f9fbfb;
}
footer .ic { width: 7px; height: 7px; }
footer button { width: 9px; height: 9px; }
footer .pressed { border: 1px solid #a5a9ab; background: #e6e8e9; }
footer p { flex: 1; margin-left: 3px; padding-left: 2px; border-left: 1px solid #ccc; }
footer p::before {
  content: "";
  display: inline-block;
  width: 2px;
  height: 2px;
  margin-right: 2px;
  vertical-align: middle;
  background: #17608c;
}
footer .find { width: 20px; height: 11px; border-left: 1px solid #ccc; }
footer .find::after { margin-left: 2px; }
footer .box { width: 15px; height: 11px; background: #f4f6f6; }
.pick { position: relative; width: 66px; margin-left: 34px; }
.pick::after {
  content: "";
  position: absolute;
  top: 5px;
  right: 2px;
  border: 1px solid transparent;
  border-top: 2px solid #444;
  border-bottom: 0;
}
.pick select {
  appearance: none;
  display: block;
  width: 100%;
  height: 12px;
  padding: 0 3px;
  border: 1px solid #aeb2b4;
  border-radius: 0;
  background: linear-gradient(to left, transparent 5px, #c5c9cb 5px, #c5c9cb 6px, transparent 6px) #fff;
  color: #555;
  font: inherit;
  font-feature-settings: inherit;
}
```
